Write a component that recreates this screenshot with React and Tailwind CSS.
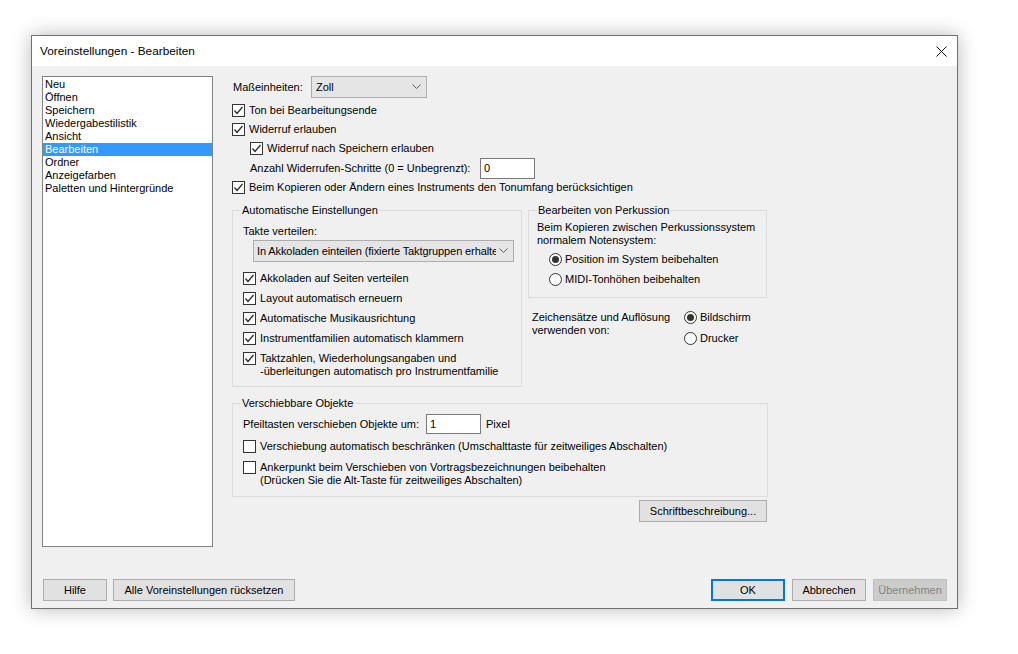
import React from 'react';

const listItems = [
    'Neu', 'Öffnen', 'Speichern', 'Wiedergabestilistik', 'Ansicht',
    'Bearbeiten', 'Ordner', 'Anzeigefarben', 'Paletten und Hintergründe',
];

function CheckBox({ checked }) {
    return (
        <span className="w-[13px] h-[13px] shrink-0 border border-[#333333] bg-white flex items-center justify-center">
            {checked && (
                <svg width="11" height="11" viewBox="0 0 11 11">
                    <polyline points="1.5,5.5 4,8.5 9.5,2" fill="none" stroke="#222" strokeWidth="1.2" />
                </svg>
            )}
        </span>
    );
}

function Radio({ checked }) {
    return (
        <span className="w-[13px] h-[13px] shrink-0 rounded-full border border-[#333333] bg-white flex items-center justify-center">
            {checked && <span className="w-[7px] h-[7px] rounded-full bg-[#333333]" />}
        </span>
    );
}

function CheckRow({ checked, children, className = 'h-[20px]' }) {
    return (
        <div className={`flex items-center gap-[4px] ${className}`}>
            <CheckBox checked={checked} />
            <span className="whitespace-nowrap">{children}</span>
        </div>
    );
}

function Chevron() {
    return (
        <svg width="9" height="6" viewBox="0 0 9 6" className="shrink-0">
            <polyline points="0.5,0.5 4.5,4.5 8.5,0.5" fill="none" stroke="#606060" strokeWidth="1" />
        </svg>
    );
}

function Group({ title, className = '', children }) {
    return (
        <div className={`relative border border-[#dcdcdc] ${className}`}>
            <span className="absolute -top-[7px] left-[8px] px-[1px] bg-[#f0f0f0] leading-[13px] whitespace-nowrap">{title}</span>
            {children}
        </div>
    );
}

function Button({ children, className = '', disabled, primary }) {
    let look = 'bg-[#e1e1e1] border border-[#adadad] text-black';
    if (disabled) look = 'bg-[#cccccc] border border-[#bfbfbf] text-[#838383]';
    if (primary) look = 'bg-[#e1e1e1] border-2 border-[#0078d7] text-black';
    return (
        <div className={`h-[22px] flex items-center justify-center whitespace-nowrap ${look} ${className}`}>
            {children}
        </div>
    );
}

export default function App() {
    return (
        <div className="w-[1018px] h-[654px] bg-white pt-[35px] pl-[31px] font-['Liberation_Sans',Arial,sans-serif] text-[11px] leading-[13px] text-black">
            <div className="w-[927px] h-[574px] border border-[#707070] bg-[#f0f0f0] flex flex-col shadow-[0_0_18px_rgba(0,0,0,0.28)]">
                {/* title bar */}
                <div className="h-[30px] bg-white flex items-center justify-between pl-[8px] pr-[10px] shrink-0">
                    <span className="text-[11.8px]">Voreinstellungen - Bearbeiten</span>
                    <svg width="11" height="11" viewBox="0 0 11 11">
                        <path d="M0.5 0.5 L10.5 10.5 M10.5 0.5 L0.5 10.5" stroke="#111" strokeWidth="1" />
                    </svg>
                </div>

                <div className="flex-1 flex flex-col px-[10px] pt-[10px]">
                    <div className="flex">
                        {/* category list */}
                        <div className="w-[171px] h-[471px] border border-[#828282] bg-white shrink-0 pt-[1px]">
                            {listItems.map((item) => (
                                <div
                                    key={item}
                                    className={`h-[13px] pl-[2px] leading-[13px] whitespace-nowrap ${item === 'Bearbeiten' ? 'bg-[#3399ff] text-white' : ''}`}
                                >
                                    {item}
                                </div>
                            ))}
                        </div>

                        {/* settings */}
                        <div className="ml-[19px] w-[536px] flex flex-col">
                            <div className="flex items-center h-[22px]">
                                <span className="w-[79px] pl-[1px]">Maßeinheiten:</span>
                                <div className="w-[116px] h-[22px] bg-[#e5e5e5] border border-[#adadad] flex items-center justify-between pl-[4px] pr-[5px]">
                                    <span>Zoll</span>
                                    <Chevron />
                                </div>
                            </div>
                            <CheckRow checked className="mt-[3px] h-[19px]">Ton bei Bearbeitungsende</CheckRow>
                            <CheckRow checked className="h-[19px]">Widerruf erlauben</CheckRow>
                            <CheckRow checked className="h-[19px] ml-[18px]">Widerruf nach Speichern erlauben</CheckRow>
                            <div className="flex items-center h-[20px] ml-[18px]">
                                <span className="w-[230px] whitespace-nowrap">Anzahl Widerrufen-Schritte (0 = Unbegrenzt):</span>
                                <div className="w-[55px] h-[21px] bg-white border border-[#7a7a7a] flex items-center pl-[3px]">0</div>
                            </div>
                            <CheckRow checked className="h-[19px]">Beim Kopieren oder Ändern eines Instruments den Tonumfang berücksichtigen</CheckRow>

                            <div className="flex gap-[6px] items-start mt-[13px]">
                                <Group title="Automatische Einstellungen" className="w-[290px] h-[177px] pl-[10px] pt-[14px]">
                                    <div className="h-[13px]">Takte verteilen:</div>
                                    <div className="mt-[2px] ml-[10px] w-[261px] h-[22px] bg-[#e5e5e5] border border-[#adadad] flex items-center pl-[3px] pr-[5px]">
                                        <span className="flex-1 overflow-hidden whitespace-nowrap tracking-[-0.1px]">In Akkoladen einteilen (fixierte Taktgruppen erhalte</span>
                                        <span className="w-[12px] flex justify-end"><Chevron /></span>
                                    </div>
                                    <div className="mt-[6px]">
                                        <CheckRow checked>Akkoladen auf Seiten verteilen</CheckRow>
                                        <CheckRow checked>Layout automatisch erneuern</CheckRow>
                                        <CheckRow checked>Automatische Musikausrichtung</CheckRow>
                                        <CheckRow checked>Instrumentfamilien automatisch klammern</CheckRow>
                                        <div className="flex items-start gap-[4px] pt-[4px]">
                                            <CheckBox checked />
                                            <span className="leading-[13px]">
                                                Taktzahlen, Wiederholungsangaben und<br />
                                                -überleitungen automatisch pro Instrumentfamilie
                                            </span>
                                        </div>
                                    </div>
                                </Group>

                                <div className="flex flex-col">
                                    <Group title="Bearbeiten von Perkussion" className="w-[239px] h-[88px] pl-[8px] pt-[10px]">
                                        <div>Beim Kopieren zwischen Perkussionssystem<br />normalem Notensystem:</div>
                                        <div className="mt-[2px] ml-[12px]">
                                            <div className="flex items-center gap-[3px] h-[20px]"><Radio checked /><span>Position im System beibehalten</span></div>
                                            <div className="flex items-center gap-[3px] h-[20px]"><Radio /><span>MIDI-Tonhöhen beibehalten</span></div>
                                        </div>
                                    </Group>
                                    <div className="flex mt-[9px] ml-[4px]">
                                        <div className="w-[152px] pt-[4px]">Zeichensätze und Auflösung<br />verwenden von:</div>
                                        <div>
                                            <div className="flex items-center gap-[3px] h-[21px]"><Radio checked /><span>Bildschirm</span></div>
                                            <div className="flex items-center gap-[3px] h-[21px]"><Radio /><span>Drucker</span></div>
                                        </div>
                                    </div>
                                </div>
                            </div>

                            <Group title="Verschiebbare Objekte" className="mt-[16px] w-[536px] h-[94px] pl-[10px] pt-[10px]">
                                <div className="flex items-center h-[20px]">
                                    <span className="w-[183px] whitespace-nowrap">Pfeiltasten verschieben Objekte um:</span>
                                    <div className="w-[55px] h-[20px] bg-white border border-[#7a7a7a] flex items-center pl-[3px]">1</div>
                                    <span className="ml-[5px]">Pixel</span>
                                </div>
                                <CheckRow className="mt-[2px] h-[20px]">Verschiebung automatisch beschränken (Umschalttaste für zeitweiliges Abschalten)</CheckRow>
                                <div className="flex items-start gap-[4px] pt-[5px]">
                                    <CheckBox />
                                    <span className="leading-[13px]">
                                        Ankerpunkt beim Verschieben von Vortragsbezeichnungen beibehalten<br />
                                        (Drücken Sie die Alt-Taste für zeitweiliges Abschalten)
                                    </span>
                                </div>
                            </Group>

                            <div className="flex justify-end mt-[3px] mr-[1px]">
                                <Button className="w-[128px]">Schriftbeschreibung...</Button>
                            </div>
                        </div>
                    </div>

                    {/* bottom buttons */}
                    <div className="flex items-center mt-[32px]">
                        <Button className="ml-[1px] w-[64px]">Hilfe</Button>
                        <Button className="ml-[6px] w-[182px]">Alle Voreinstellungen rücksetzen</Button>
                        <div className="flex-1" />
                        <Button primary className="w-[74px]">OK</Button>
                        <Button className="ml-[7px] w-[74px]">Abbrechen</Button>
                        <Button disabled className="ml-[7px] w-[74px]">Übernehmen</Button>
                    </div>
                </div>
            </div>
        </div>
    );
}
